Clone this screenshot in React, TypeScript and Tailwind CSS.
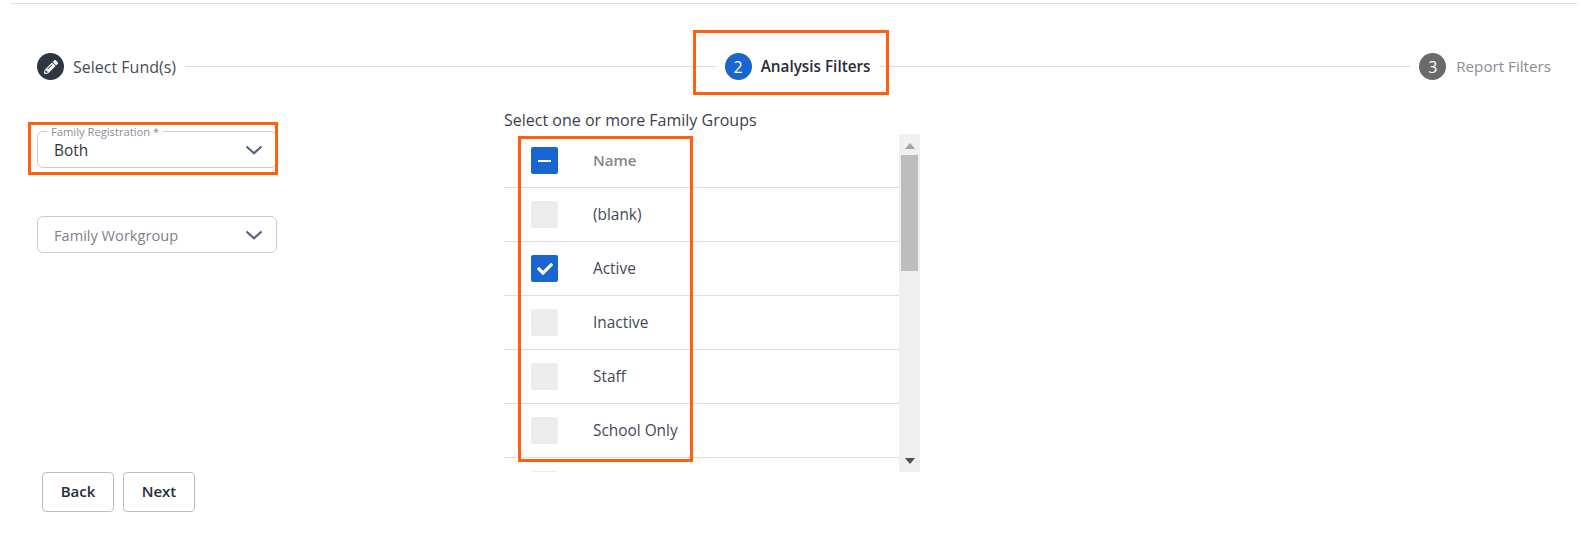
import { FaCheck, FaPencilAlt } from 'react-icons/fa';

const font = { sans: 'font-["Open_Sans",sans-serif]' };

function Chevron() {
  return (
    <svg width="18" height="10" viewBox="0 0 18 10" fill="none">
      <path d="M1.5 1.5L9 8.2L16.5 1.5" stroke="#56637c" strokeWidth="2.2" />
    </svg>
  );
}

function Select({ label, value, placeholder }: { label?: string; value?: string; placeholder?: string }) {
  return (
    <div className="relative w-[240px] h-[37px] border border-[#c9cad0] rounded-[6px] flex items-center justify-between pl-[16px] pr-[13px]">
      {label && (
        <span className="absolute left-[9px] -top-[7px] bg-white px-[4px] text-[11.2px] leading-[13px] text-[#8a8d99]">{label}</span>
      )}
      {value && <span className="text-[15.4px] text-[#2f3542] pt-[2px]">{value}</span>}
      {placeholder && <span className="text-[14.6px] text-[#7d808c] pt-[2px]">{placeholder}</span>}
      <Chevron />
    </div>
  );
}

const rows = [
  { name: '(blank)', state: 'off' },
  { name: 'Active', state: 'on' },
  { name: 'Inactive', state: 'off' },
  { name: 'Staff', state: 'off' },
  { name: 'School Only', state: 'off' },
];

function Box({ state }: { state: string }) {
  if (state === 'on') {
    return (
      <div className="w-[27px] h-[27px] rounded-[2px] bg-[#1a66d0] flex items-center justify-center">
        <FaCheck size={16} className="text-white" />
      </div>
    );
  }
  if (state === 'mixed') {
    return (
      <div className="w-[27px] h-[27px] rounded-[2px] bg-[#1a66d0] flex items-center justify-center">
        <div className="w-[13px] h-[2px] bg-white" />
      </div>
    );
  }
  return <div className="w-[27px] h-[27px] rounded-[2px] bg-[#ebecee]" />;
}

export default function App() {
  return (
    <div className={`relative w-[1581px] h-[540px] bg-white overflow-hidden ${font.sans}`}>
      {/* top rule */}
      <div className="ml-[10px] mr-[4px] h-[4px] border-b border-[#e0e0e0]" />

      {/* Stepper */}
      <div className="flex items-center pl-[37px] pr-[30px] mt-[49px] h-[27px]">
        <div className="w-[27px] h-[27px] rounded-full bg-[#2f3640] flex items-center justify-center">
          <FaPencilAlt size={14} className="text-white" />
        </div>
        <span className="ml-[9px] text-[16px] text-[#474c57]">Select Fund(s)</span>
        <div className="flex-1 h-px bg-[#dcdcdc] mx-[9px]" />
        <div className="w-[27px] h-[27px] rounded-full bg-[#1a66d0] text-white text-[16px] flex items-center justify-center">2</div>
        <span className="ml-[9px] text-[15.3px] font-semibold text-[#272c38]">Analysis Filters</span>
        <div className="flex-1 h-px bg-[#dcdcdc] mx-[9px]" />
        <div className="w-[27px] h-[27px] rounded-full bg-[#6a6a6a] text-white text-[16px] flex items-center justify-center">3</div>
        <span className="ml-[10px] text-[15.2px] text-[#8b8b94]">Report Filters</span>
      </div>

      <div className="flex mt-[30px]">
        {/* Left column */}
        <div className="w-[504px] pl-[37px] pt-[21px] flex flex-col">
          <Select label="Family Registration *" value="Both" />
          <div className="mt-[48px]">
            <Select placeholder="Family Workgroup" />
          </div>
          <div className="mt-[219px] ml-[5px] flex gap-[9px]">
            <button className="w-[72px] h-[40px] pb-[2px] rounded-[4px] border border-[#babdc6] text-[15px] font-semibold text-[#272c38]">Back</button>
            <button className="w-[72px] h-[40px] pb-[2px] rounded-[4px] border border-[#babdc6] text-[15px] font-semibold text-[#272c38]">Next</button>
          </div>
        </div>

        {/* Family groups */}
        <div className="w-[416px]">
          <div className="h-[24px] text-[16px] leading-[20px] text-[#3b404c]">Select one or more Family Groups</div>
          <div className="flex h-[338px] overflow-hidden">
            <div className="flex-1">
              <div className="h-[54px] border-b border-[#dedede] flex items-center pl-[27px]">
                <Box state="mixed" />
                <span className="ml-[35px] text-[15px] font-semibold text-[#85868c]">Name</span>
              </div>
              {rows.map((r) => (
                <div key={r.name} className="h-[54px] border-b border-[#dedede] flex items-center pl-[27px]">
                  <Box state={r.state} />
                  <span className="ml-[35px] text-[15.4px] text-[#41495a]">{r.name}</span>
                </div>
              ))}
              <div className="h-[54px] pt-[13px] pl-[27px]">
                <Box state="off" />
              </div>
            </div>
            {/* scrollbar */}
            <div className="w-[21px] bg-[#f0f0f0] flex flex-col items-center">
              <svg width="10" height="6" viewBox="0 0 10 6" className="mt-[9px]"><path d="M5 0L10 6H0Z" fill="#a3a3a3" /></svg>
              <div className="w-[17px] h-[116px] mt-[6px] bg-[#bdbdbd]" />
              <svg width="10" height="6" viewBox="0 0 10 6" className="mt-[187px]"><path d="M0 0H10L5 6Z" fill="#505050" /></svg>
            </div>
          </div>
        </div>
      </div>

      {/* orange annotation boxes */}
      <div className="absolute left-[693px] top-[30px] w-[196px] h-[65px] border-[3px] border-[#ff5f0f]" />
      <div className="absolute left-[28px] top-[122px] w-[250px] h-[53px] border-[3px] border-[#ff5f0f]" />
      <div className="absolute left-[518px] top-[136px] w-[175px] h-[326px] border-[3px] border-[#ff5f0f]" />
    </div>
  );
}
